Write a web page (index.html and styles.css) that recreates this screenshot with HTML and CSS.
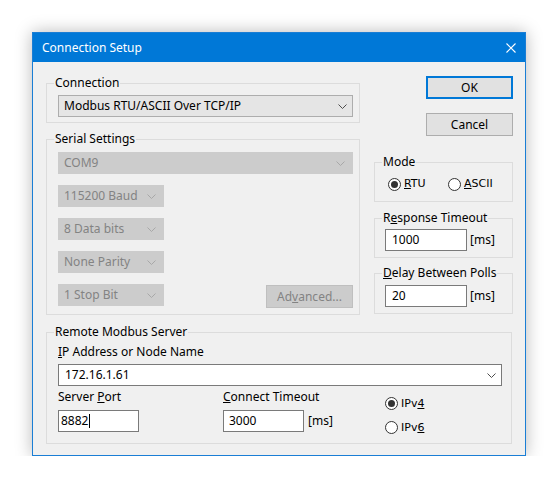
FILE: index.html
```html
<!DOCTYPE html>
<html>
<head>
<meta charset="utf-8">
<link rel="stylesheet" href="styles.css">
</head>
<body>
<div class="window">
  <div class="titlebar">
    <span class="title">Connection Setup</span>
    <svg class="close" width="10" height="10" viewBox="0 0 10 10"><path d="M0.5 0.5 L9.5 9.5 M9.5 0.5 L0.5 9.5" stroke="#fff" stroke-width="1.1" fill="none"/></svg>
  </div>
  <div class="client">
    <div class="top">
      <div class="leftcol">
        <fieldset class="group g-conn">
          <legend>Connection</legend>
          <div class="gbody">
            <div class="combo ro full"><span>Modbus RTU/ASCII Over TCP/IP</span><svg class="chev" width="9" height="5" viewBox="0 0 9 5"><path d="M0.5 0.5 L4.5 4.5 L8.5 0.5" stroke="#4d4d4d" fill="none"/></svg></div>
          </div>
        </fieldset>
        <fieldset class="group g-serial">
          <legend>Serial Settings</legend>
          <div class="gbody rows">
            <div class="combo dis full"><span>COM9</span><svg class="chev" width="9" height="5" viewBox="0 0 9 5"><path d="M0.5 0.5 L4.5 4.5 L8.5 0.5" stroke="#a8a8a8" fill="none"/></svg></div>
            <div class="combo dis small"><span>115200 Baud</span><svg class="chev" width="9" height="5" viewBox="0 0 9 5"><path d="M0.5 0.5 L4.5 4.5 L8.5 0.5" stroke="#a8a8a8" fill="none"/></svg></div>
            <div class="combo dis small"><span>8 Data bits</span><svg class="chev" width="9" height="5" viewBox="0 0 9 5"><path d="M0.5 0.5 L4.5 4.5 L8.5 0.5" stroke="#a8a8a8" fill="none"/></svg></div>
            <div class="combo dis small"><span>None Parity</span><svg class="chev" width="9" height="5" viewBox="0 0 9 5"><path d="M0.5 0.5 L4.5 4.5 L8.5 0.5" stroke="#a8a8a8" fill="none"/></svg></div>
            <div class="lastrow">
              <div class="combo dis small"><span>1 Stop Bit</span><svg class="chev" width="9" height="5" viewBox="0 0 9 5"><path d="M0.5 0.5 L4.5 4.5 L8.5 0.5" stroke="#a8a8a8" fill="none"/></svg></div>
              <div class="btn dis adv">Ad<u>v</u>anced...</div>
            </div>
          </div>
        </fieldset>
      </div>
      <div class="rightcol">
        <div class="btn default">OK</div>
        <div class="btn cancel">Cancel</div>
        <fieldset class="group g-mode">
          <legend>Mode</legend>
          <div class="gbody moderow">
            <label class="opt opt1"><span class="radio on"></span><span class="rtext"><u>R</u>TU</span></label>
            <label class="opt"><span class="radio"></span><span class="rtext"><u>A</u>SCII</span></label>
          </div>
        </fieldset>
        <fieldset class="group g-resp">
          <legend>R<u>e</u>sponse Timeout</legend>
          <div class="gbody editrow">
            <div class="edit ms">1000</div><span class="unit">[ms]</span>
          </div>
        </fieldset>
        <fieldset class="group g-delay">
          <legend><u>D</u>elay Between Polls</legend>
          <div class="gbody editrow">
            <div class="edit ms">20</div><span class="unit">[ms]</span>
          </div>
        </fieldset>
      </div>
    </div>
    <fieldset class="group g-remote">
      <legend>Remote Modbus Server</legend>
      <div class="gbody remote">
        <div class="lbl"><u>I</u>P Address or Node Name</div>
        <div class="combo edt"><span>172.16.1.61</span><svg class="chev" width="9" height="5" viewBox="0 0 9 5"><path d="M0.5 0.5 L4.5 4.5 L8.5 0.5" stroke="#4d4d4d" fill="none"/></svg></div>
        <div class="portrow">
          <div class="pcol">
            <div class="lbl">Server <u>P</u>ort</div>
            <div class="edit port">8882<span class="caret"></span></div>
          </div>
          <div class="tcol">
            <div class="lbl"><u>C</u>onnect Timeout</div>
            <div class="editrow2"><div class="edit port">3000</div><span class="unit">[ms]</span></div>
          </div>
          <div class="vcol">
            <label class="opt"><span class="radio on"></span><span class="rtext">IPv<u>4</u></span></label>
            <label class="opt v6"><span class="radio"></span><span class="rtext">IPv<u>6</u></span></label>
          </div>
        </div>
      </div>
    </fieldset>
  </div>
</div>
</body>
</html>
```
FILE: styles.css
```css
* { box-sizing: border-box; }
html, body { margin: 0; background: #ffffff; }
body {
  font-family: "Noto Sans", "Open Sans", sans-serif;
  font-size: 12px;
  line-height: 16px;
  color: #000;
  padding: 32px 0 0 32px;
}
u { text-decoration: underline; text-underline-offset: 1px; }
.window {
  width: 494px;
  height: 424px;
  border: 1px solid #1a7ed5;
  background: #f0f0f0;
  box-shadow: 0 0 16px rgba(0,0,0,0.28);
  display: flex;
  flex-direction: column;
}
.titlebar {
  height: 29px;
  flex: none;
  background: #0078d7;
  color: #fff;
  display: flex;
  align-items: center;
  justify-content: space-between;
  padding: 0 9px 0 9px;
}
.title { font-size: 12px; }
.close { display: block; }
.client { padding: 13px 0 0 13px; }
.top { display: flex; gap: 14px; }
.leftcol { width: 314px; display: flex; flex-direction: column; }
.rightcol { width: 139px; display: flex; flex-direction: column; }

.group {
  margin: 0;
  padding: 0;
  border: 1px solid #dcdcdc;
  min-width: 0;
}
.group legend {
  margin-left: 7px;
  padding: 0 1px;
  line-height: 16px;
}
.g-conn .gbody { padding: 4px 6px 5px 11px; }
.g-serial { margin-top: 8px; }
.g-serial .gbody { padding: 5px 6px 6px 11px; }
.rows { display: flex; flex-direction: column; gap: 11px; }
.lastrow { display: flex; justify-content: space-between; align-items: flex-start; }

.combo {
  height: 22px;
  display: flex;
  align-items: center;
  justify-content: space-between;
  padding: 0 5px 0 5px;
  border: 1px solid #adadad;
}
.combo.ro { background: #e5e5e5; border-color: #adadad; }
.combo.full { width: 295px; }
.combo.dis { background: #cccccc; border-color: #cccccc; color: #838383; padding-right: 7px; }
.combo.small { width: 106px; }
.combo.edt { background: #fff; border-color: #7a7a7a; width: 444px; margin-top: 4px; padding-left: 6px; }
.chev { display: block; flex: none; }

.btn {
  height: 23px;
  display: flex;
  align-items: center;
  justify-content: center;
  background: #e1e1e1;
  border: 1px solid #adadad;
}
.btn.dis { background: #cccccc; border-color: #bfbfbf; color: #838383; width: 87px; margin-top: 1px; }
.btn.default { width: 87px; margin: 1px 0 0 52px; border: 2px solid #0078d7; }
.btn.cancel { width: 87px; margin: 14px 0 0 52px; }

.g-mode { margin-top: 18px; }
.moderow { display: flex; padding: 7px 0 10px 13px; }
.opt { display: flex; align-items: center; height: 14px; }
.opt1 { width: 60px; }
.radio {
  width: 13px;
  height: 13px;
  border: 1px solid #333;
  border-radius: 50%;
  background: #fff;
  flex: none;
  display: flex;
  align-items: center;
  justify-content: center;
  margin-right: 3px;
}
.radio.on::after {
  content: "";
  width: 7px;
  height: 7px;
  border-radius: 50%;
  background: #333;
}
.rtext { font-family: "DejaVu Sans", sans-serif; font-size: 11px; line-height: 14px; }

.g-resp { margin-top: 8px; }
.g-resp .gbody { padding: 3px 0 6px 10px; }
.g-delay { margin-top: 7px; }
.g-delay .gbody { padding: 4px 0 6px 10px; }
.editrow, .editrow2 { display: flex; align-items: center; }
.edit {
  height: 22px;
  background: #fff;
  border: 1px solid #7a7a7a;
  display: flex;
  align-items: center;
  padding-left: 6px;
}
.edit.ms { width: 82px; }
.unit { margin-left: 3px; }

.g-remote { margin-top: 9px; width: 466px; }
.remote { padding: 4px 9px 9px 11px; }
.portrow { display: flex; margin-top: 3px; }
.pcol { width: 165px; }
.tcol { width: 162px; }
.pcol .edit, .tcol .edit { margin-top: 5px; }
.edit.port { width: 81px; padding-left: 2px; }
.tcol .edit.port { padding-left: 5px; }
.editrow2 .unit { margin-left: 4px; margin-top: 5px; }
.vcol { padding-top: 8px; }
.vcol .opt { height: 13px; }
.vcol .v6 { margin-top: 11px; }
.caret { display: inline-block; width: 1px; height: 14px; background: #000; margin-left: 1px; }
```
